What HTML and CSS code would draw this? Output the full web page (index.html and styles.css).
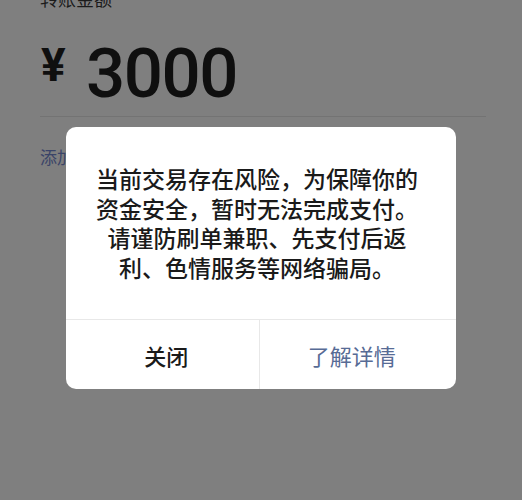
FILE: index.html
```html
<!DOCTYPE html>
<html lang="zh-CN">
<head>
<meta charset="utf-8">
<title>转账</title>
<link rel="stylesheet" href="styles.css">
</head>
<body>
<div class="page">
  <div class="label">转账金额</div>
  <div class="amount">
    <span class="yen">¥</span>
    <span class="num">3000</span>
  </div>
  <div class="rule"></div>
  <div class="note">添加转账说明</div>
</div>
<div class="dialog">
  <div class="msg">当前交易存在风险，为保障你的<br>资金安全，暂时无法完成支付。<br>请谨防刷单兼职、先支付后返<br>利、色情服务等网络骗局。</div>
  <div class="actions">
    <div class="btn close">关闭</div>
    <div class="btn more">了解详情</div>
  </div>
</div>
</body>
</html>
```
FILE: styles.css
```css
html, body {
  margin: 0;
  padding: 0;
  background: #7f7f7f;
  overflow: hidden;
}
body {
  width: 522px;
  height: 500px;
  position: relative;
  font-family: "Noto Sans CJK SC", "Noto Sans", sans-serif;
}
.page {
  padding: 0 36px 0 40px;
}
.label {
  margin-top: -13px;
  font-size: 18px;
  line-height: 22px;
  color: #1b1b1b;
}
.amount {
  display: flex;
  align-items: flex-start;
  margin-top: 30px;
  color: #0f0f0f;
  font-family: Roboto, "Liberation Sans", sans-serif;
}
.yen {
  font-size: 46px;
  line-height: 1;
  font-weight: 700;
  margin-top: 3px;
  margin-left: 1px;
  width: 45px;
}
.num {
  font-size: 69px;
  line-height: 1;
  font-weight: 500;
  letter-spacing: -1.5px;
}
.rule {
  height: 1px;
  background: #737373;
  margin-top: 8px;
}
.note {
  margin-top: 28px;
  font-size: 17px;
  line-height: 24px;
  color: #3a4468;
}
.dialog {
  position: absolute;
  left: 66px;
  top: 127px;
  width: 390px;
  height: 262px;
  background: #fff;
  border-radius: 10px;
  display: flex;
  flex-direction: column;
  overflow: hidden;
}
.msg {
  flex: 1;
  padding: 37px 20px 0 12px;
  font-size: 23px;
  line-height: 29.5px;
  font-weight: 500;
  text-align: center;
  color: #1a1a1a;
}
.actions {
  display: flex;
  height: 69px;
  border-top: 1px solid #e8e8e8;
}
.btn {
  flex: 1;
  display: flex;
  align-items: center;
  justify-content: center;
  font-size: 22px;
}
.close {
  color: #1a1a1a;
  border-right: 1px solid #e8e8e8;
  padding-left: 8px;
  font-weight: 500;
}
.more {
  color: #576b95;
  padding-right: 12px;
}
```
